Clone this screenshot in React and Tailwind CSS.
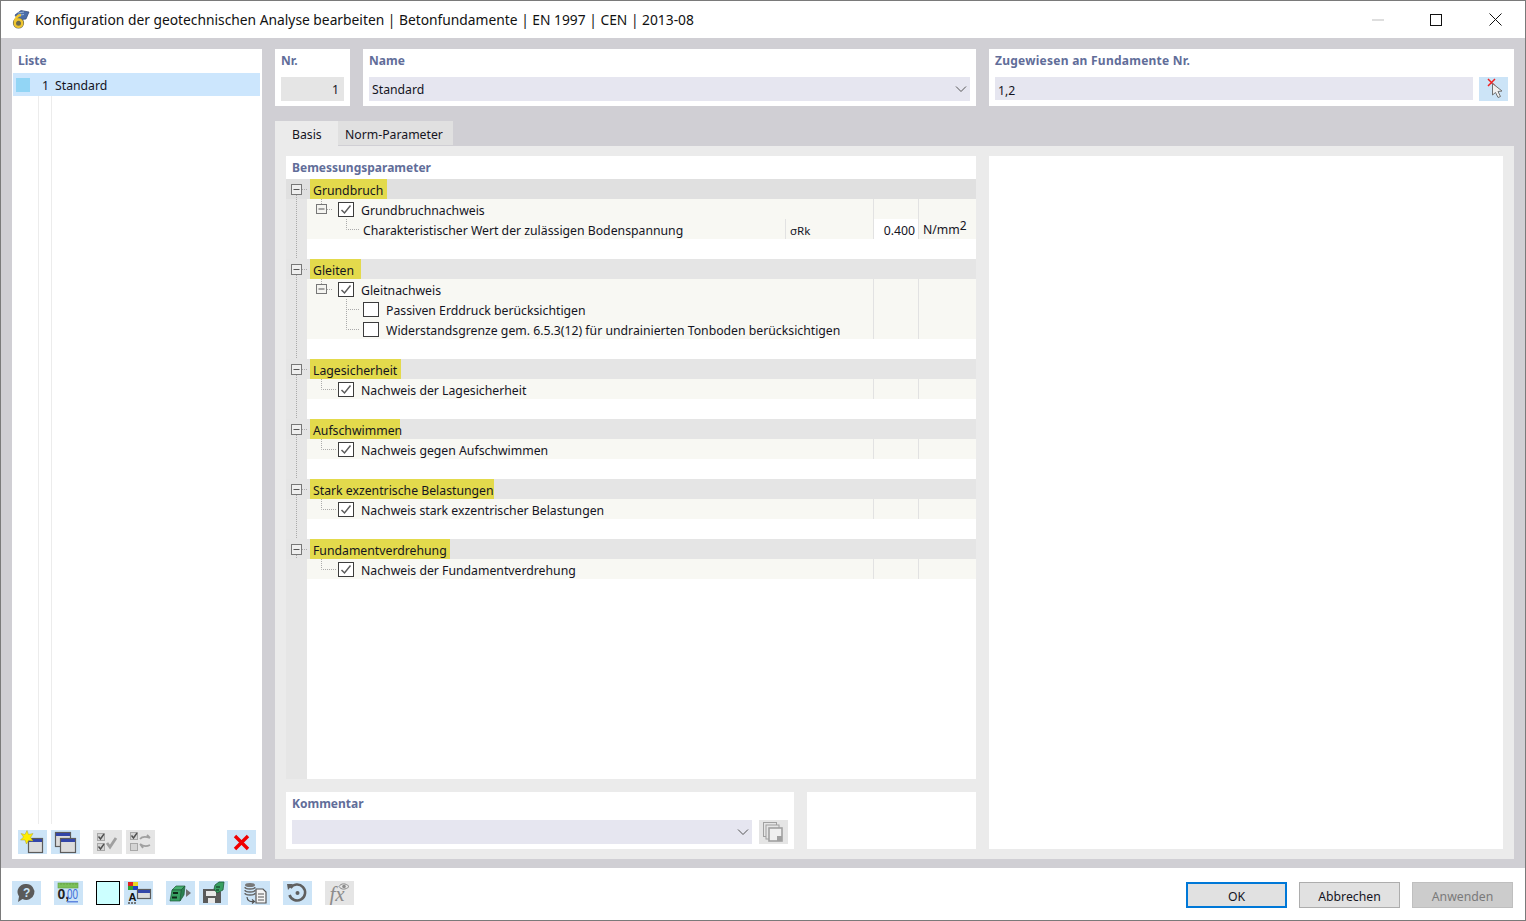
import React from "react";

const F = { fontFamily: '"Noto Sans", "Open Sans", sans-serif' };

function Label({ children, className = "" }) {
  return <div className={"text-[12px] leading-[17px] font-bold text-[#616d99] " + className}>{children}</div>;
}

function Chevron() {
  return (
    <svg width="12" height="8" viewBox="0 0 12 8" className="shrink-0">
      <path d="M1 1.5 L6 6.5 L11 1.5" fill="none" stroke="#555" strokeWidth="1" />
    </svg>
  );
}

function IconBtn({ active = true, children }) {
  return (
    <div className={"w-[29px] h-6 flex items-center justify-center shrink-0 " + (active ? "bg-[#cce4f7]" : "bg-[#e5e5e5]")}>
      <svg width="29" height="24" viewBox="0 0 29 24">{children}</svg>
    </div>
  );
}

const Win = ({ x, y, w = 14, h = 13 }) => (
  <g>
    <rect x={x + 0.5} y={y + 0.5} width={w} height={h} fill="#dcdcdc" stroke="#5c5c5c" strokeWidth="1.2" />
    <rect x={x + 1} y={y + 1} width={w - 1} height="3" fill="#3346a8" />
  </g>
);

const MiniCheck = ({ x, y, on = true }) => (
  <g>
    <rect x={x + 0.5} y={y + 0.5} width="7" height="7" fill="#d4d4d4" stroke="#a8a8a8" />
    {on && <path d={`M${x + 1.5} ${y + 3.5} l2 2.5 l3.5 -5`} fill="none" stroke="#505050" strokeWidth="1.4" />}
  </g>
);

function TreeHeader({ label, w, dark }) {
  return (
    <div className={"h-5 flex " + (dark ? "bg-[#e0e0e0]" : "bg-[#e5e5e5]")}>
      <svg width="24" height="20" viewBox="0 0 24 20" className="shrink-0">
        <path d="M10.5 16 V20" stroke="#aaa" strokeDasharray="1 1" />
        <path d="M16 10.5 H22" stroke="#aaa" strokeDasharray="1 1" />
        <rect x="5.5" y="5.5" width="10" height="10" fill="#eee" stroke="#777" />
        <path d="M7.5 10.5 H13.5" stroke="#555" />
      </svg>
      <div className="bg-[#e3da4c] h-5 pl-[3px] text-[12.25px] leading-[23px] text-[#14141e] whitespace-nowrap" style={{ width: w }}>
        {label}
      </div>
    </div>
  );
}

function Gutter({ line = true }) {
  return (
    <div className="w-[21px] h-full shrink-0 bg-[#e6e6e6]">
      {line && (
        <svg width="21" height="20" viewBox="0 0 21 20" className="block">
          <path d="M10.5 0 V20" stroke="#aaa" strokeDasharray="1 1" />
        </svg>
      )}
    </div>
  );
}

function Check({ on }) {
  return (
    <div className="w-4 h-[15px] border border-[#3c3c3c] bg-white shrink-0 mt-px">
      {on && (
        <svg width="14" height="13" viewBox="0 0 14 13" className="block">
          <path d="M2.5 7 L5.5 10 L11.5 2.5" fill="none" stroke="#5c5c5c" strokeWidth="1.5" />
        </svg>
      )}
    </div>
  );
}

function Conn({ kind }) {
  if (kind === "expander")
    return (
      <svg width="31" height="20" viewBox="0 0 31 20" className="shrink-0">
        <path d="M14.5 0 V5" stroke="#aaa" strokeDasharray="1 1" />
        <path d="M20 10.5 H26" stroke="#aaa" strokeDasharray="1 1" />
        <rect x="9.5" y="5.5" width="10" height="9" fill="#f4f4f0" stroke="#777" />
        <path d="M11.5 10 H17.5" stroke="#555" />
      </svg>
    );
  if (kind === "leaf")
    return (
      <svg width="31" height="20" viewBox="0 0 31 20" className="shrink-0">
        <path d="M14.5 0 V10.5 H29" fill="none" stroke="#aaa" strokeDasharray="1 1" />
      </svg>
    );
  return (
    <svg width="56" height="20" viewBox="0 0 56 20" className="shrink-0">
      {kind === "l2mid" && <path d="M39.5 0 V20" stroke="#aaa" strokeDasharray="1 1" />}
      <path d="M39.5 0 V10.5 H53" fill="none" stroke="#aaa" strokeDasharray="1 1" />
    </svg>
  );
}

function TreeRow({ kind, check, children, line = true, symbol, value, unit }) {
  return (
    <div className="h-5 flex items-stretch">
      <Gutter line={line} />
      <div className="flex-1 flex bg-[#f8f8f3] min-w-0">
        <div className="w-[566px] flex items-center min-w-0 shrink-0">
          <Conn kind={kind} />
          {check !== undefined && <Check on={check} />}
          <div className={"pt-[2px] leading-[17px] text-[12.25px] whitespace-nowrap text-[#14141e] " + (check !== undefined ? "ml-[7px]" : "")}>{children}</div>
          {symbol && (
            <div className="ml-auto h-full w-[88px] border-l border-[#e2e2e2] pl-1 text-[11.5px] leading-[23px] text-[#14141e]">{symbol}</div>
          )}
        </div>
        <div className={"w-[46px] shrink-0 border-x border-[#e2e2e2] text-right pr-[3px] text-[12.25px] leading-[23px] text-[#14141e] " + (value ? "bg-white" : "")}>{value}</div>
        <div className="flex-1 pl-1 text-[12.25px] leading-[22px] text-[#14141e] whitespace-nowrap">
          {unit}
        </div>
      </div>
    </div>
  );
}

function Blank({ line = true }) {
  return (
    <div className="h-5 flex items-stretch">
      <Gutter line={line} />
      <div className="flex-1 bg-white" />
    </div>
  );
}

function Pushbutton({ children, primary, disabled }) {
  return (
    <div
      className={
        "w-[101px] h-[26px] flex items-center justify-center pt-[5px] text-[12.25px] " +
        (primary
          ? "border-2 border-[#0078d7] bg-[#e1e1e1] text-[#14141e]"
          : disabled
          ? "border border-[#bfbfbf] bg-[#cccccc] text-[#7a7a7a]"
          : "border border-[#adadad] bg-[#e1e1e1] text-[#14141e]")
      }
    >
      {children}
    </div>
  );
}

export default function App() {
  return (
    <div className="w-[1526px] h-[921px] flex flex-col bg-white border border-[#7a7a7a] overflow-hidden" style={F}>
      {/* title bar */}
      <div className="h-[37px] shrink-0 flex items-center bg-white">
        <svg width="22" height="22" viewBox="0 0 22 22" className="ml-[8px] shrink-0">
          <path d="M6 6 L12 1.5 L20 3 L17 10 L9 11 Z" fill="#4a6da8" stroke="#2f4674" strokeWidth="0.7" />
          <path d="M9 4 L15 3 M8 6.5 L15 5.5" stroke="#9bb4da" />
          <circle cx="9.5" cy="14" r="5.6" fill="#6b6b50" />
          <circle cx="9.5" cy="14.2" r="3.7" fill="none" stroke="#efc52f" strokeWidth="2.4" />
          <path d="M6 13 C6.5 9 8.5 6.5 12 6" fill="none" stroke="#efc52f" strokeWidth="2.4" />
        </svg>
        <div className="ml-[4px] pt-px text-[13.8px] text-[#111] whitespace-nowrap">
          Konfiguration der geotechnischen Analyse bearbeiten | Betonfundamente | EN 1997 | CEN | 2013-08
        </div>
        <div className="ml-auto flex items-center">
          <svg width="12" height="2" viewBox="0 0 12 2" className="shrink-0">
            <rect width="12" height="1" y="0.5" fill="#bdbdbd" />
          </svg>
          <svg width="12" height="12" viewBox="0 0 12 12" className="ml-[46px] shrink-0">
            <rect x="0.5" y="0.5" width="11" height="11" fill="none" stroke="#111" />
          </svg>
          <svg width="13" height="13" viewBox="0 0 13 13" className="ml-[47px] mr-[23px] shrink-0">
            <path d="M0.5 0.5 L12.5 12.5 M12.5 0.5 L0.5 12.5" stroke="#111" />
          </svg>
        </div>
      </div>

      {/* body */}
      <div className="h-[830px] shrink-0 bg-[#d0cfd4] flex pl-[11px] pr-[11px] pt-[11px] pb-[9px]">
        {/* left list */}
        <div className="w-[250px] shrink-0 bg-white flex flex-col">
          <Label className="pl-[6px] pt-[3px] h-6">Liste</Label>
          <div className="flex-1 flex flex-col pl-px pr-[2px] min-h-0">
            <div className="h-[23px] bg-[#cce6fd] flex items-center shrink-0">
              <div className="w-[14px] h-[14px] bg-[#92d5f5] ml-[3px]" />
              <div className="w-[18px] text-right pt-[2px] leading-[17px] text-[12.25px] text-[#14141e] ml-[1px]">1</div>
              <div className="ml-[6px] pt-[2px] leading-[17px] text-[12.25px] text-[#14141e]">Standard</div>
            </div>
            <div className="flex-1 flex min-h-0">
              <div className="w-[26px] border-r border-[#ececec]" />
              <div className="w-[13px] border-r border-[#ececec]" />
            </div>
          </div>
          <div className="h-[35px] shrink-0 flex items-start pl-[6px] pr-[6px] pt-[6px]">
            <IconBtn>
              <Win x={10} y={8} w={14} h={14} />
              <path d="M9 0.5 L10.5 4.5 L15 3.5 L12.5 7.5 L15 11 L10.5 10.5 L8.5 14 L7 10 L2.5 10 L5.5 7 L3 3.5 L7 4.5 Z" fill="#ffee00" stroke="#b0a428" strokeWidth="0.5" />
            </IconBtn>
            <div className="ml-1">
              <IconBtn>
                <Win x={4} y={2} w={15} h={14} />
                <Win x={9} y={8} w={15} h={14} />
              </IconBtn>
            </div>
            <div className="ml-[13px]">
              <IconBtn active={false}>
                <MiniCheck x={4} y={3} />
                <MiniCheck x={4} y={13} />
                <path d="M14 13 L17 17 L23 8" fill="none" stroke="#a0a0a0" strokeWidth="2.8" />
              </IconBtn>
            </div>
            <div className="ml-1">
              <IconBtn active={false}>
                <MiniCheck x={4} y={2} />
                <MiniCheck x={4} y={13} on={false} />
                <path d="M14 9 C16 6.5 20 6.5 24 8 M24 8 L21 5 M24 15 C20 17 16.5 16 14 14 M14 14 L17 18" fill="none" stroke="#a0a0a0" strokeWidth="1.8" />
              </IconBtn>
            </div>
            <div className="ml-auto">
              <IconBtn>
                <path d="M8 6 L21 19 M21 6 L8 19" stroke="#f00000" strokeWidth="3.4" />
              </IconBtn>
            </div>
          </div>
        </div>

        {/* main */}
        <div className="w-[1239px] ml-[13px] shrink-0 flex flex-col">
          <div className="flex gap-[13px] h-[57px] shrink-0">
            <div className="w-[75px] bg-white px-[6px] pt-[3px]">
              <Label className="mb-[8px]">Nr.</Label>
              <div className="h-6 bg-[#e5e5e5] text-right pr-[5px] text-[12.25px] leading-[25px] text-[#14141e]">1</div>
            </div>
            <div className="w-[613px] bg-white px-[6px] pt-[3px]">
              <Label className="mb-[8px]">Name</Label>
              <div className="h-6 bg-[#e6e6f0] flex items-center justify-between pl-[3px] pr-[3px] text-[12.25px] text-[#14141e]">
                <span className="pt-[2px]">Standard</span>
                <Chevron />
              </div>
            </div>
            <div className="w-[525px] bg-white px-[6px] pt-[3px]">
              <Label className="mb-[8px] tracking-[0.25px]">Zugewiesen an Fundamente Nr.</Label>
              <div className="flex gap-[6px]">
                <div className="flex-1 h-[23px] bg-[#e6e6f0] pl-[3px] text-[12.25px] leading-[28px] text-[#14141e]">1,2</div>
                <div className="w-[29px] h-6 bg-[#cce4f7]">
                  <svg width="29" height="24" viewBox="0 0 29 24" className="block">
                    <path d="M9 2 L16 9 M16 2 L9 9" stroke="#f02020" strokeWidth="1.5" />
                    <path d="M13.5 6.5 L13.5 18 L16.5 15.5 L19 20.5 L21.5 19.5 L19 14.5 L23 14 Z" fill="#f0f0f0" stroke="#707070" />
                  </svg>
                </div>
              </div>
            </div>
          </div>

          {/* tabs */}
          <div className="flex mt-[15px] h-[25px] shrink-0 text-[12.25px] text-[#14141e]">
            <div className="w-[63px] bg-[#ebebeb] pl-[17px] leading-[27px]">Basis</div>
            <div className="w-[115px] h-[24px] bg-[#e0e0e0] pl-[7px] leading-[27px]">Norm-Parameter</div>
          </div>
          <div className="flex-1 bg-[#ebebeb] flex gap-[13px] pl-[11px] pr-[11px] pt-[10px] pb-[10px] min-h-0">
            <div className="w-[690px] shrink-0 flex flex-col gap-[13px]">
              <div className="h-[623px] bg-white flex flex-col overflow-hidden">
                <Label className="h-[23px] pl-[6px] pt-[3px] shrink-0">Bemessungsparameter</Label>

                <TreeHeader label="Grundbruch" w={77} dark />
                <TreeRow kind="expander" check={true}>Grundbruchnachweis</TreeRow>
                <TreeRow kind="l2" symbol="σRk" value="0.400" unit={<span>N/mm<sup className="static text-[12px] align-[4px] leading-none">2</sup></span>}>
                  Charakteristischer Wert der zulässigen Bodenspannung
                </TreeRow>
                <Blank />

                <TreeHeader label="Gleiten" w={51} />
                <TreeRow kind="expander" check={true}>Gleitnachweis</TreeRow>
                <TreeRow kind="l2mid" check={false}>Passiven Erddruck berücksichtigen</TreeRow>
                <TreeRow kind="l2" check={false}>Widerstandsgrenze gem. 6.5.3(12) für undrainierten Tonboden berücksichtigen</TreeRow>
                <Blank />

                <TreeHeader label="Lagesicherheit" w={91} />
                <TreeRow kind="leaf" check={true}>Nachweis der Lagesicherheit</TreeRow>
                <Blank />

                <TreeHeader label="Aufschwimmen" w={90} />
                <TreeRow kind="leaf" check={true}>Nachweis gegen Aufschwimmen</TreeRow>
                <Blank />

                <TreeHeader label="Stark exzentrische Belastungen" w={184} />
                <TreeRow kind="leaf" check={true}>Nachweis stark exzentrischer Belastungen</TreeRow>
                <Blank />

                <TreeHeader label="Fundamentverdrehung" w={140} />
                <TreeRow kind="leaf" check={true} line={false}>Nachweis der Fundamentverdrehung</TreeRow>
                <div className="flex-1 flex">
                  <div className="w-[21px] bg-[#e6e6e6]" />
                </div>
              </div>
              <div className="h-[57px] flex gap-[13px] shrink-0">
                <div className="w-[508px] bg-white px-[6px] pt-[3px]">
                  <Label className="mb-[8px]">Kommentar</Label>
                  <div className="flex gap-[7px]">
                    <div className="flex-1 h-6 bg-[#e6e6f0] flex items-center justify-end pr-[3px]">
                      <Chevron />
                    </div>
                    <div className="w-[29px] h-6 bg-[#e5e5e5]">
                      <svg width="29" height="24" viewBox="0 0 29 24" className="block">
                        <rect x="4.5" y="2.5" width="13" height="14" fill="#e5e5e5" stroke="#a0a0a0" />
                        <rect x="7" y="5" width="13" height="14" fill="#e5e5e5" stroke="#a0a0a0" />
                        <rect x="10" y="8" width="13" height="13" fill="#efefef" stroke="#a0a0a0" strokeWidth="1.6" />
                        <rect x="18" y="16" width="5" height="5" fill="#a0a0a0" />
                      </svg>
                    </div>
                  </div>
                </div>
                <div className="w-[169px] bg-white" />
              </div>
            </div>
            <div className="flex-1 bg-white" />
          </div>
        </div>
      </div>

      {/* footer */}
      <div className="flex-1 bg-white flex items-start pl-[11px] pr-[12px] pt-[13px]">
        <IconBtn>
          <path d="M14.5 3 a8 8 0 1 1 -4 15 l-4.5 3 l1 -5.5 a8 8 0 0 1 7.5 -12.5 Z" fill="#5a5a5a" />
          <text x="14.6" y="15.5" textAnchor="middle" fontSize="12" fontWeight="700" fill="#cce4f7" fontFamily="Liberation Sans, sans-serif">?</text>
        </IconBtn>
        <div className="ml-[13px]">
          <IconBtn>
            <rect x="4" y="2" width="20" height="5" fill="#7cc05a" stroke="#5e9e40" strokeWidth="0.6" />
            <path d="M7 2 v2 M10 2 v2 M13 2 v2 M16 2 v2 M19 2 v2 M22 2 v2" stroke="#5e9e40" strokeWidth="0.7" />
            <text x="3.5" y="18" fontSize="14" fontWeight="700" fill="#222" fontFamily="Liberation Sans, sans-serif">0,</text>
            <text x="13" y="18" fontSize="14" fill="#3d6fd8" fontFamily="Liberation Sans, sans-serif" textLength="11" lengthAdjust="spacingAndGlyphs">00</text>
            <rect x="13" y="20" width="11" height="1.5" fill="#5f86e0" />
          </IconBtn>
        </div>
        <div className="ml-[13px] w-6 h-6 bg-[#ccffff] border border-black shrink-0" />
        <div className="ml-1">
          <IconBtn>
            <rect x="4" y="1" width="5" height="4" fill="#e02020" />
            <rect x="9" y="1" width="5" height="4" fill="#e8d820" />
            <rect x="4" y="5" width="5" height="4" fill="#30a030" />
            <rect x="9" y="5" width="5" height="4" fill="#2040c0" />
            <text x="4.5" y="20" fontSize="11" fontWeight="700" fill="#111" fontFamily="Liberation Sans, sans-serif">A</text>
            <path d="M4 22 h2 M7 22 h2 M10 22 h2" stroke="#555" strokeWidth="1.5" />
            <Win x={13} y={8} w={13} h={9} />
          </IconBtn>
        </div>
        <div className="ml-[13px]">
          <IconBtn>
            <path d="M6 9 L10 5 L19 5 L15 9 Z" fill="#46b070" stroke="#1e5a38" strokeWidth="0.7" />
            <path d="M15 9 L19 5 L18 14 L14 20 Z" fill="#2a8050" stroke="#1e5a38" strokeWidth="0.7" />
            <path d="M6 9 H15 L14 20 H4 Z" fill="#38a062" stroke="#1e5a38" strokeWidth="0.7" />
            <path d="M7 12 h5 M6 16.5 h5" stroke="#0e2a1a" strokeWidth="1.8" />
            <path d="M20 8 L25 12 L20 16 Z" fill="#707070" />
          </IconBtn>
        </div>
        <div className="ml-1">
          <IconBtn>
            <path d="M4 8 H19 L22 11 V22 H4 Z" fill="#5a5a5a" />
            <rect x="7" y="10" width="10" height="5" fill="#e8e8e8" />
            <rect x="9" y="17" width="7" height="5" fill="#e8e8e8" />
            <path d="M16 4 L20 1 L25 1 L24 9 L18 12 L15 8 Z" fill="#38a062" stroke="#1e5a38" strokeWidth="0.8" />
            <path d="M17 6 h4 M17 9 h3" stroke="#0e2a1a" strokeWidth="1.2" />
          </IconBtn>
        </div>
        <div className="ml-[13px]">
          <IconBtn>
            <ellipse cx="9" cy="4" rx="5" ry="2" fill="#777" />
            <path d="M4 6 a5 2 0 0 0 10 0 M4 9 a5 2 0 0 0 10 0 M4 12 a5 2 0 0 0 10 0" fill="none" stroke="#666" strokeWidth="1.4" />
            <path d="M6 16 C6 20 10 21 13 20.5 M11 18.5 L13.5 20.5 L11 22.5" fill="none" stroke="#555" strokeWidth="1.2" />
            <path d="M15 8 H22 L25 11 V22 H15 Z" fill="#f4f4f4" stroke="#555" strokeWidth="1.2" />
            <path d="M17 13 H23 M17 16 H23 M17 19 H23" stroke="#555" />
          </IconBtn>
        </div>
        <div className="ml-[13px]">
          <IconBtn>
            <path d="M7.5 7 A8 8 0 1 1 6.5 14" fill="none" stroke="#5f5f5f" strokeWidth="2.6" />
            <path d="M4 3 L10 3 L5 9 Z" fill="#5f5f5f" />
            <circle cx="14.5" cy="12" r="2" fill="#5f5f5f" />
          </IconBtn>
        </div>
        <div className="ml-[13px]">
          <IconBtn active={false}>
            <text x="4.5" y="19.5" fontSize="21" fontStyle="italic" fill="#8c8c8c" fontFamily="Liberation Serif, serif">fx</text>
            <path d="M14 5.5 C16 2 21 2 24 5.5 C21 9 16 9 14 5.5 Z" fill="#e5e5e5" stroke="#8c8c8c" />
            <circle cx="19" cy="5.5" r="1.8" fill="#8c8c8c" />
          </IconBtn>
        </div>
        <div className="ml-auto flex gap-3 pt-px">
          <Pushbutton primary>OK</Pushbutton>
          <Pushbutton>Abbrechen</Pushbutton>
          <Pushbutton disabled>Anwenden</Pushbutton>
        </div>
      </div>
    </div>
  );
}
